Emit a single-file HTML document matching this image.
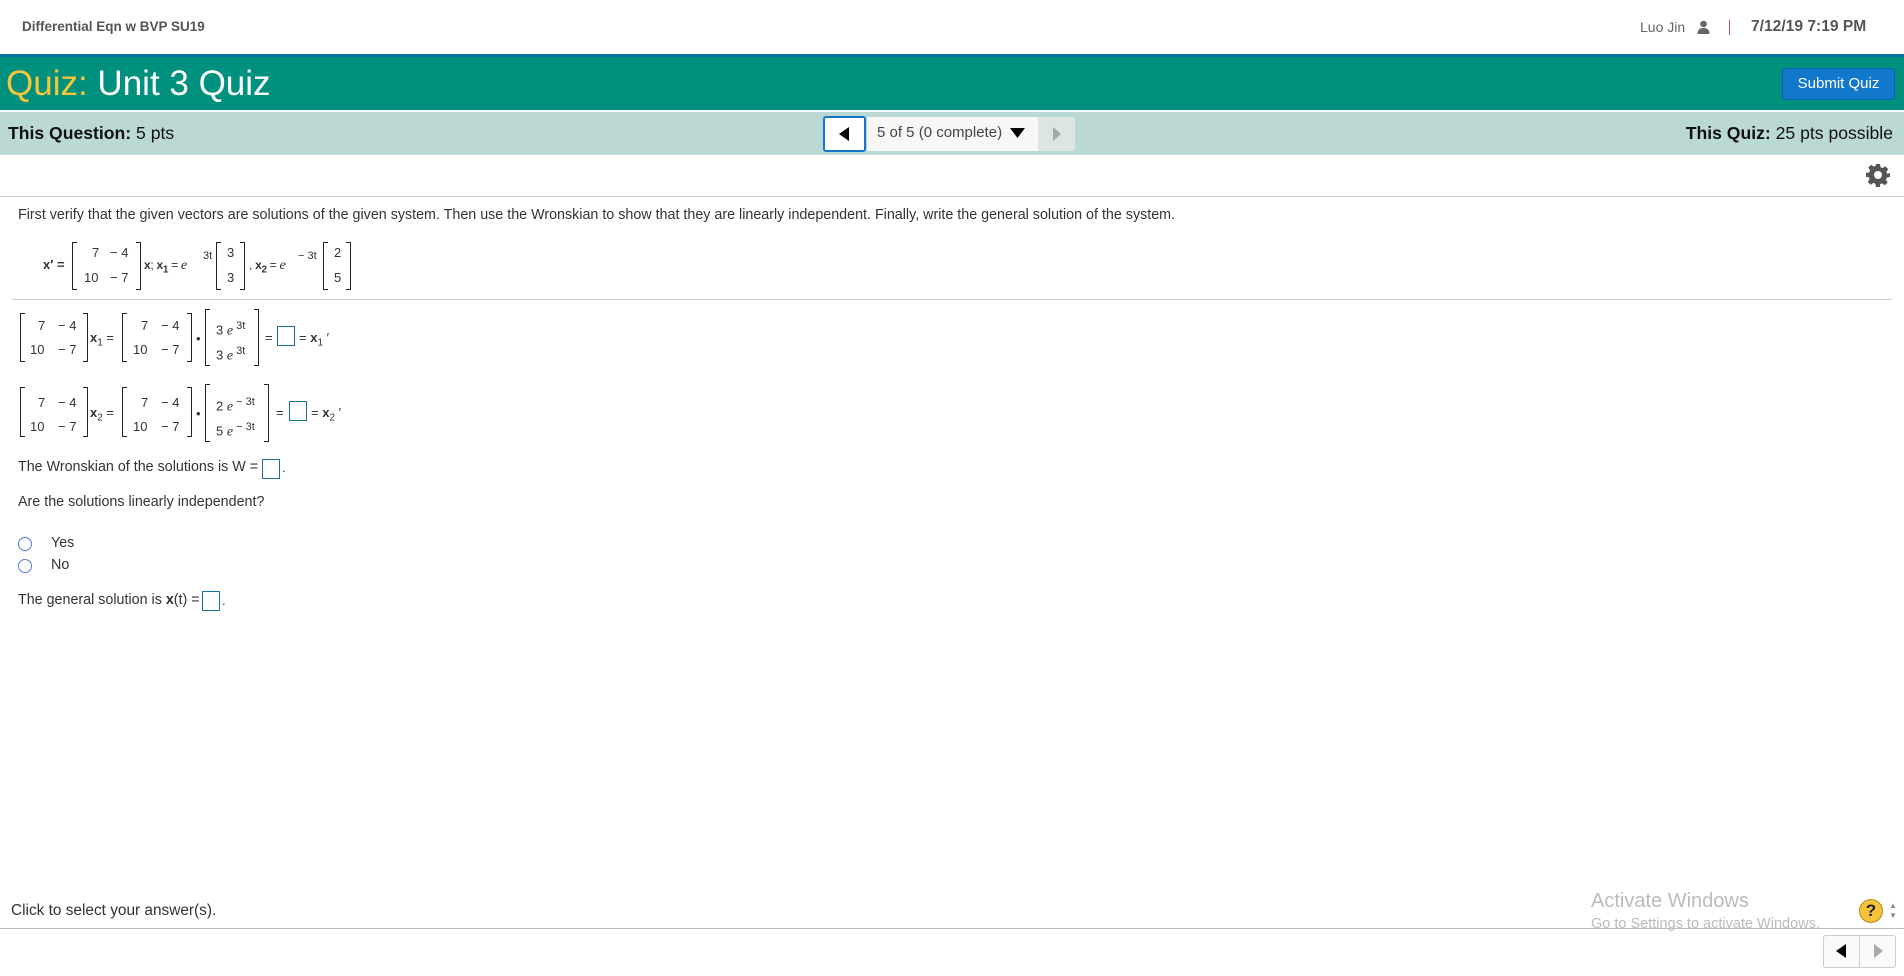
<!DOCTYPE html>
<html><head><meta charset="utf-8"><style>
*{margin:0;padding:0;box-sizing:border-box}
body{width:1904px;height:976px;position:relative;background:#fff;font-family:"Liberation Sans",Arial,sans-serif;color:#333;overflow:hidden}
.a{position:absolute;white-space:nowrap}
.m{font-size:13px;line-height:15px;color:#333}
.bl{position:absolute;border:1.5px solid #222;border-right:none;width:5px}
.br{position:absolute;border:1.5px solid #222;border-left:none;width:5px}
.box{position:absolute;border:1.5px solid #1a7296;width:18px;height:20px}
.e{font-family:"Liberation Serif",serif;font-style:italic;font-size:14px}
.b{font-weight:bold}
.q{font-size:14.3px}
</style></head><body>
<div class="a" style="left:22px;top:19px;font-size:13.5px;font-weight:bold;color:#555">Differential Eqn w BVP SU19</div>
<div class="a" style="left:1640px;top:19px;font-size:14px;color:#666">Luo Jin</div>
<svg class="a" style="left:1697px;top:20px" width="13" height="14" viewBox="0 0 13 14"><circle cx="6.5" cy="4" r="3.3" fill="#666"/><path d="M0.5 14 Q0.5 8 6.5 8 Q12.5 8 12.5 14Z" fill="#666"/></svg>
<div class="a" style="left:1729px;top:20px;width:1px;height:15px;background:#a55"></div>
<div class="a" style="left:1751px;top:18px;font-size:15.6px;font-weight:bold;color:#555">7/12/19 7:19 PM</div>

<div class="a" style="left:0;top:54px;width:1904px;height:3px;background:#00719a"></div>
<div class="a" style="left:0;top:57px;width:1904px;height:53px;background:#00907e"></div>
<div class="a" style="left:6px;top:64px;font-size:35px;line-height:40px;color:#fff"><span style="color:#f7c53a">Quiz:</span> Unit 3 Quiz</div>
<div class="a" style="left:1782px;top:68px;width:113px;height:32px;background:#1178cc;border:1px solid #0d62a8;border-radius:3px;color:#fff;font-size:15px;line-height:30px;text-align:center">Submit Quiz</div>
<div class="a" style="left:0;top:112px;width:1904px;height:43px;background:#bbd9d4"></div>
<div class="a" style="left:8px;top:123px;font-size:17.6px;color:#111"><b>This Question:</b> 5 pts</div>
<div class="a" style="right:11px;top:123px;font-size:17.6px;color:#111"><b>This Quiz:</b> 25 pts possible</div>
<div class="a" style="left:823px;top:116px;width:43px;height:36px;background:#fff;border:2.5px solid #1773cc;border-radius:3px"></div>
<svg class="a" style="left:838px;top:127px" width="12" height="14"><path d="M11 0V14L1 7Z" fill="#000"/></svg>
<div class="a" style="left:867px;top:117px;width:171px;height:34px;background:#f7f7f7"></div>
<div class="a" style="left:877px;top:124px;font-size:15px;color:#444">5 of 5 (0 complete)</div>
<svg class="a" style="left:1010px;top:128px" width="15" height="11"><path d="M0 0H15L7.5 10Z" fill="#000"/></svg>
<div class="a" style="left:1038px;top:117px;width:37px;height:34px;background:#dde5e3;border-radius:0 3px 3px 0"></div>
<svg class="a" style="left:1052px;top:127px" width="10" height="14"><path d="M1 0V14L9 7Z" fill="#9fa9a7"/></svg>

<svg class="a" style="left:1866px;top:163px" width="24" height="24" viewBox="0 0 24 24"><path fill="#555" d="M10 1h4l.6 3.2 2 .9 2.8-1.8 2.8 2.8-1.8 2.8.9 2L24 10v4l-3.2.6-.9 2 1.8 2.8-2.8 2.8-2.8-1.8-2 .9L14 24h-4l-.6-3.2-2-.9-2.8 1.8-2.8-2.8 1.8-2.8-.9-2L0 14v-4l3.2-.6.9-2L2.3 4.6l2.8-2.8 2.8 1.8 2-.9Z"/><circle cx="12" cy="12" r="4" fill="#fff"/></svg>
<div class="a" style="left:0;top:196px;width:1904px;height:1px;background:#c8ccd8"></div>

<div class="a q" style="left:18px;top:207px;color:#333">First verify that the given vectors are solutions of the given system. Then use the Wronskian to show that they are linearly independent. Finally, write the general solution of the system.</div>

<!-- given system -->
<div class="a m b" style="left:43px;top:257px">x′ =</div>
<div class="bl" style="left:72px;top:242px;height:48px"></div>
<div class="br" style="left:136px;top:242px;height:48px"></div>
<div class="a m" style="left:92px;top:245px">7</div><div class="a m" style="left:110px;top:245px">− 4</div>
<div class="a m" style="left:84px;top:270px">10</div><div class="a m" style="left:110px;top:270px">− 7</div>
<div class="a m" style="left:144px;top:258px;font-size:12px;letter-spacing:-0.3px"><b>x</b>; <b>x<sub style="font-size:10px">1</sub></b> = <span class="e">e</span></div>
<div class="a" style="left:203px;top:250px;font-size:11px">3t</div>
<div class="bl" style="left:216px;top:242px;height:48px"></div>
<div class="br" style="left:240px;top:242px;height:48px"></div>
<div class="a m" style="left:227px;top:245px">3</div><div class="a m" style="left:227px;top:270px">3</div>
<div class="a m" style="left:249px;top:258px;font-size:12px;letter-spacing:-0.3px">, <b>x<sub style="font-size:10px">2</sub></b> = <span class="e">e</span></div>
<div class="a" style="left:298px;top:250px;font-size:11px">− 3t</div>
<div class="bl" style="left:323px;top:242px;height:48px"></div>
<div class="br" style="left:346px;top:242px;height:48px"></div>
<div class="a m" style="left:334px;top:245px">2</div><div class="a m" style="left:334px;top:270px">5</div>
<div class="a" style="left:12px;top:299px;width:1880px;height:1px;background:#c8ccd8"></div>

<!-- row 1 -->
<div class="bl" style="left:20px;top:313px;height:49px"></div>
<div class="br" style="left:83px;top:313px;height:49px"></div>
<div class="a m" style="left:38px;top:318px">7</div><div class="a m" style="left:58px;top:318px">− 4</div>
<div class="a m" style="left:30px;top:342px">10</div><div class="a m" style="left:58px;top:342px">− 7</div>
<div class="a m" style="left:90px;top:330px"><b>x</b><sub style="font-size:10px">1</sub> =</div>
<div class="bl" style="left:122px;top:313px;height:49px"></div>
<div class="br" style="left:187px;top:313px;height:49px"></div>
<div class="a m" style="left:141px;top:318px">7</div><div class="a m" style="left:161px;top:318px">− 4</div>
<div class="a m" style="left:133px;top:342px">10</div><div class="a m" style="left:161px;top:342px">− 7</div>
<div class="a m" style="left:196px;top:331px">•</div>
<div class="bl" style="left:205px;top:309px;height:57px"></div>
<div class="br" style="left:254px;top:309px;height:57px"></div>
<div class="a m" style="left:216px;top:319px">3 <span class="e">e</span><sup style="font-size:11px"> 3t</sup></div>
<div class="a m" style="left:216px;top:344px">3 <span class="e">e</span><sup style="font-size:11px"> 3t</sup></div>
<div class="a m" style="left:265px;top:330px">=</div>
<div class="box" style="left:277px;top:326px"></div>
<div class="a m" style="left:299px;top:330px">= <b>x</b><sub style="font-size:10px">1</sub> ′</div>

<!-- row 2 -->
<div class="bl" style="left:20px;top:387px;height:50px"></div>
<div class="br" style="left:83px;top:387px;height:50px"></div>
<div class="a m" style="left:38px;top:395px">7</div><div class="a m" style="left:58px;top:395px">− 4</div>
<div class="a m" style="left:30px;top:419px">10</div><div class="a m" style="left:58px;top:419px">− 7</div>
<div class="a m" style="left:90px;top:405px"><b>x</b><sub style="font-size:10px">2</sub> =</div>
<div class="bl" style="left:122px;top:387px;height:50px"></div>
<div class="br" style="left:187px;top:387px;height:50px"></div>
<div class="a m" style="left:141px;top:395px">7</div><div class="a m" style="left:161px;top:395px">− 4</div>
<div class="a m" style="left:133px;top:419px">10</div><div class="a m" style="left:161px;top:419px">− 7</div>
<div class="a m" style="left:196px;top:406px">•</div>
<div class="bl" style="left:205px;top:384px;height:58px"></div>
<div class="br" style="left:264px;top:384px;height:58px"></div>
<div class="a m" style="left:216px;top:395px">2 <span class="e">e</span><sup style="font-size:11px"> − 3t</sup></div>
<div class="a m" style="left:216px;top:420px">5 <span class="e">e</span><sup style="font-size:11px"> − 3t</sup></div>
<div class="a m" style="left:276px;top:405px">=</div>
<div class="box" style="left:289px;top:401px"></div>
<div class="a m" style="left:311px;top:405px">= <b>x</b><sub style="font-size:10px">2</sub> ′</div>

<div class="a q" style="left:18px;top:459px">The Wronskian of the solutions is W =</div>
<div class="box" style="left:262px;top:459px"></div>
<div class="a" style="left:282px;top:460px;font-size:13px">.</div>
<div class="a q" style="left:18px;top:494px">Are the solutions linearly independent?</div>
<div class="a" style="left:18px;top:537px;width:14px;height:14px;border:1.5px solid #5b7ed8;border-radius:50%"></div>
<div class="a q" style="left:51px;top:535px">Yes</div>
<div class="a" style="left:18px;top:559px;width:14px;height:14px;border:1.5px solid #5b7ed8;border-radius:50%"></div>
<div class="a q" style="left:51px;top:557px">No</div>
<div class="a q" style="left:18px;top:592px">The general solution is <b>x</b>(t) =</div>
<div class="box" style="left:202px;top:591px"></div>
<div class="a" style="left:222px;top:593px;font-size:13px">.</div>

<div class="a" style="left:11px;top:902px;font-size:15.4px;color:#333">Click to select your answer(s).</div>
<div class="a" style="left:1591px;top:890px;font-size:20px;color:#bbb">Activate Windows</div>
<div class="a" style="left:1591px;top:916px;font-size:14.5px;color:#bbb">Go to Settings to activate Windows.</div>
<div class="a" style="left:0;top:928px;width:1904px;height:1px;background:#b8bcc8"></div>
<div class="a" style="left:1859px;top:899px;width:24px;height:24px;border-radius:50%;background:#f5c33b;border:1px solid #b58a1a;text-align:center;font-size:17px;font-weight:bold;line-height:22px;color:#222">?</div>
<div class="a" style="left:1889px;top:901px;font-size:8px;color:#888;line-height:10px">▲<br>▼</div>
<div class="a" style="left:1823px;top:935px;width:73px;height:33px;border:1px solid #ccc;border-radius:3px;background:#fafafa"></div>
<div class="a" style="left:1859px;top:936px;width:1px;height:31px;background:#ccc"></div>
<svg class="a" style="left:1836px;top:944px" width="11" height="14"><path d="M10 0V14L0 7Z" fill="#000"/></svg>
<svg class="a" style="left:1873px;top:944px" width="11" height="14"><path d="M1 0V14L10 7Z" fill="#aaa"/></svg>
</body></html>
